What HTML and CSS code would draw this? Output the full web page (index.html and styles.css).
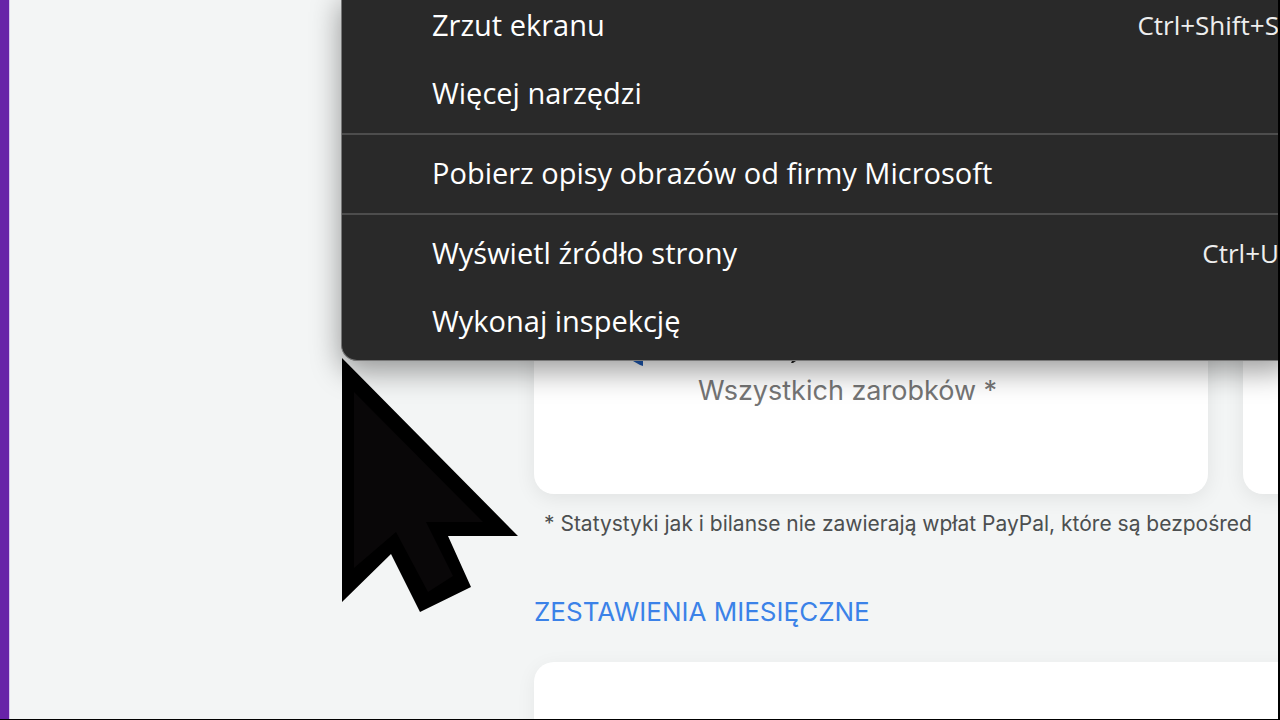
FILE: index.html
```
<!DOCTYPE html>
<html lang="pl">
<head>
    <meta charset="UTF-8">
    <meta name="viewport" content="width=device-width, initial-scale=1.0">
    <title>Statystyki</title>
    <link rel="stylesheet" href="styles.css">
</head>
<body>
    <div class="page">
        <main class="content">
            <section class="cards">
                <div class="card">
                    <div class="card-top">
                        <svg class="card-icon" width="12" height="6" viewBox="0 0 12 6" aria-hidden="true">
                            <path d="M0 0h10v5L7 4z" fill="#1c59b5"/>
                        </svg>
                        <svg class="card-mark" width="6" height="6" viewBox="0 0 6 6" aria-hidden="true">
                            <path d="M1 0h4L2 2H0z" fill="#222"/>
                        </svg>
                    </div>
                    <p class="card-label">Wszystkich zarobków *</p>
                </div>
                <div class="card"></div>
            </section>

            <p class="note">* Statystyki jak i bilanse nie zawierają wpłat PayPal, które są bezpośred</p>

            <h2>ZESTAWIENIA MIESIĘCZNE</h2>

            <section class="panel"></section>
        </main>

        <!-- Context menu -->
        <div class="menu">
            <button type="button" class="menu-item"><span>Zrzut ekranu</span><kbd>Ctrl+Shift+S</kbd></button>
            <button type="button" class="menu-item"><span>Więcej narzędzi</span></button>
            <hr>
            <button type="button" class="menu-item"><span>Pobierz opisy obrazów od firmy Microsoft</span></button>
            <hr>
            <button type="button" class="menu-item"><span>Wyświetl źródło strony</span><kbd>Ctrl+U</kbd></button>
            <button type="button" class="menu-item"><span>Wykonaj inspekcję</span></button>
        </div>

        <svg class="cursor" width="176" height="254" viewBox="0 0 176 254" aria-hidden="true">
            <path d="M0 0L176 178H106L129 229L78 254L49 196L0 244Z" fill="#000"/>
            <path d="M12 34L141 164H84L111 218L86 234L54 174L12 210Z" fill="#090708"/>
        </svg>
    </div>
</body>
</html>
```
FILE: styles.css
```
* {
    box-sizing: border-box;
}

body {
    margin: 0;
    background-color: #000;
    font-family: Inter, "Open Sans", sans-serif;
}

.page {
    position: relative;
    height: calc(100vh - 1px);
    margin-right: 2px;
    padding-left: 525px;
    overflow: hidden;
    background-color: #f3f5f5;
    border-left: 9px solid #6823a8;
    box-shadow: inset 1px 0 #d9c8ee;
}

.content {
    display: flex;
    flex-direction: column;
    height: 100%;
}

/* Cards */
.cards {
    display: grid;
    grid-template-columns: repeat(2, minmax(674px, 1fr));
    gap: 35px;
}

.card {
    padding: 361px 24px 87px;
    background-color: #fff;
    border-radius: 0 0 20px 20px;
    box-shadow: 0 4px 20px rgba(0, 0, 0, 0.08);
}

.card-top {
    display: flex;
    gap: 146px;
    height: 14px;
    padding-left: 75px;
}

.card-label {
    margin: 0;
    padding-left: 140px;
    color: #757575;
    font-size: 27px;
    line-height: 32px;
}

.note {
    margin: 18px 0 0;
    padding-left: 10px;
    color: #4c4f50;
    font-size: 21px;
    line-height: 24px;
    white-space: nowrap;
}

h2 {
    margin: 60px 0 0;
    color: #3b82e8;
    font-size: 26px;
    font-weight: 400;
    line-height: 32px;
}

.panel {
    flex: 1;
    margin: 34px -40px -40px 0;
    background-color: #fff;
    border-radius: 20px;
    box-shadow: 0 4px 20px rgba(0, 0, 0, 0.06);
}

/* Context menu */
.menu {
    position: absolute;
    top: -8px;
    left: 332px;
    right: -16px;
    padding-bottom: 4px;
    background-color: #292929;
    border: 1px solid #777;
    border-top: 0;
    border-radius: 0 0 16px 16px;
    box-shadow: 0 10px 30px rgba(0, 0, 0, 0.4);
}

.menu-item {
    display: flex;
    justify-content: space-between;
    align-items: center;
    width: 100%;
    height: 68px;
    padding: 0 14px 3px 90px;
    background: none;
    border: 0;
    color: #fff;
    font-family: "Open Sans", "Noto Sans", sans-serif;
    font-size: 29px;
    text-align: left;
    white-space: nowrap;
}

.menu-item kbd {
    color: #eee;
    font-family: inherit;
    font-size: 26px;
}

.menu hr {
    height: 2px;
    margin: 5px 0;
    background-color: #4d4d4d;
    border: 0;
}

.cursor {
    position: absolute;
    top: 358px;
    left: 333px;
}
```
